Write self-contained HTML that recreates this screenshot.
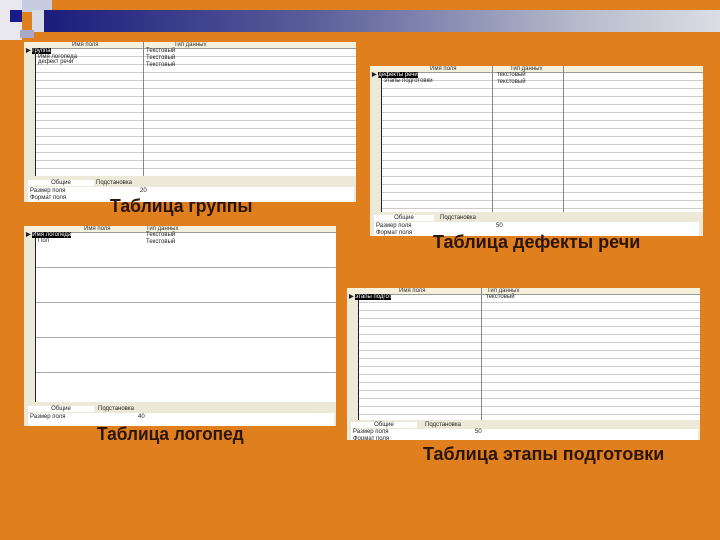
<!DOCTYPE html><html><head><meta charset="utf-8"><style>
body{margin:0;width:720px;height:540px;background:#E07F1E;position:relative;overflow:hidden;font-family:"Liberation Sans",sans-serif}
.a{position:absolute}
.p{position:absolute;background:#fff;overflow:hidden}
.hd{position:absolute;left:0;right:0;top:0;height:6px;background:#F4F0DC;border-bottom:1px solid #999;font-size:6px;line-height:6px;color:#333}
.sel{position:absolute;left:0;top:6px;width:11px;background:#ECE9D8;border-right:1px solid #222}
.rows{position:absolute;left:12px;right:0;top:7px;background:repeating-linear-gradient(#fff 0 7px,#ccc 7px 8px)}
.vl{position:absolute;top:0;width:1px;background:#888}
.bot{position:absolute;left:0;right:0;bottom:0;background:#ECE9D8}
.t{font-size:6px;line-height:7px;color:#222;position:absolute;white-space:nowrap}
.cap{position:absolute;font-weight:bold;font-size:18px;color:#2a1508;white-space:nowrap;transform-origin:0 0}
</style></head><body>
<div class="a" style="left:0;top:0;width:22px;height:40px;background:#E8E8EE"></div>
<div class="a" style="left:10px;top:10px;width:12px;height:12px;background:#1a1a8a"></div>
<div class="a" style="left:22px;top:0;width:30px;height:12px;background:#C8CCE0"></div>
<div class="a" style="left:32px;top:10px;width:22px;height:22px;background:#D8DAE6"></div>
<div class="a" style="left:20px;top:30px;width:14px;height:8px;background:#A8AACC"></div>
<div class="a" style="left:44px;top:10px;width:676px;height:22px;background:linear-gradient(90deg,#1c1c7c,#5a5f9a 40%,#b8bccc 80%,#dcdde4)"></div>

<div class="p" style="left:24px;top:42px;width:332px;height:160px">
<div class="hd"><span style="position:absolute;left:48px">Имя поля</span><span style="position:absolute;left:150px">Тип данных</span></div>
<div class="sel" style="height:128px"></div>
<div class="rows" style="height:127px"></div>
<div class="vl" style="left:119px;height:134px"></div>
<div class="t" style="left:2px;top:6px"><b>▶</b> <span style="background:#000;color:#fff">группа</span></div>
<div class="t" style="left:14px;top:12px">Имя логопеда</div>
<div class="t" style="left:14px;top:17px">дефект речи</div>
<div class="t" style="left:122px;top:6px">Текстовый<br>Текстовый<br>Текстовый</div>
<div class="bot" style="height:26px"><div class="t" style="left:4px;top:4px;background:#fff;width:66px;height:6px;text-align:center">Общие</div><div class="t" style="left:72px;top:4px">Подстановка</div><div class="a" style="left:4px;top:11px;width:326px;height:15px;background:#fff"></div><div class="t" style="left:6px;top:12px">Размер поля<br>Формат поля</div><div class="t" style="left:116px;top:12px">20</div></div>
</div>
<div class="cap" style="left:110px;top:196px;transform:scaleX(0.98)">Таблица группы</div>

<div class="p" style="left:370px;top:66px;width:333px;height:170px">
<div class="hd"><span style="position:absolute;left:60px">Имя поля</span><span style="position:absolute;left:140px">Тип данных</span></div>
<div class="sel" style="height:140px"></div>
<div class="rows" style="height:139px"></div>
<div class="vl" style="left:122px;height:146px"></div>
<div class="vl" style="left:193px;height:146px"></div>
<div class="t" style="left:2px;top:6px"><b>▶</b> <span style="background:#000;color:#fff">дефекты речи</span></div>
<div class="t" style="left:14px;top:12px">этапы подготовки</div>
<div class="t" style="left:127px;top:6px">текстовый<br>текстовый</div>
<div class="bot" style="height:24px"><div class="t" style="left:4px;top:3px;background:#fff;width:60px;height:6px;text-align:center">Общие</div><div class="t" style="left:70px;top:3px">Подстановка</div><div class="a" style="left:4px;top:10px;width:325px;height:14px;background:#fff"></div><div class="t" style="left:6px;top:11px">Размер поля<br>Формат поля</div><div class="t" style="left:126px;top:11px">50</div></div>
</div>
<div class="cap" style="left:433px;top:232px">Таблица дефекты речи</div>

<div class="p" style="left:24px;top:226px;width:312px;height:200px">
<div class="hd"><span style="position:absolute;left:60px">Имя поля</span><span style="position:absolute;left:122px">Тип данных</span></div>
<div class="sel" style="height:170px"></div>
<div class="rows" style="height:169px;background:repeating-linear-gradient(#fff 0 34px,#aaa 34px 35px)"></div>
<div class="t" style="left:2px;top:6px"><b>▶</b> <span style="background:#000;color:#fff">Имя логопеда</span></div>
<div class="t" style="left:14px;top:12px">Пол</div>
<div class="t" style="left:122px;top:6px">Текстовый<br>Текстовый</div>
<div class="bot" style="height:24px"><div class="t" style="left:4px;top:4px;background:#fff;width:66px;height:6px;text-align:center">Общие</div><div class="t" style="left:74px;top:4px">Подстановка</div><div class="a" style="left:4px;top:11px;width:306px;height:13px;background:#fff"></div><div class="t" style="left:6px;top:12px">Размер поля</div><div class="t" style="left:114px;top:12px">40</div></div>
</div>
<div class="cap" style="left:97px;top:424px;transform:scaleX(0.96)">Таблица логопед</div>

<div class="p" style="left:347px;top:288px;width:353px;height:152px">
<div class="hd"><span style="position:absolute;left:52px">Имя поля</span><span style="position:absolute;left:140px">Тип данных</span></div>
<div class="sel" style="height:126px"></div>
<div class="rows" style="height:125px"></div>
<div class="vl" style="left:134px;height:132px"></div>
<div class="t" style="left:2px;top:6px"><b>▶</b> <span style="background:#000;color:#fff">этапы подгот</span></div>
<div class="t" style="left:139px;top:6px">текстовый</div>
<div class="bot" style="height:20px"><div class="t" style="left:4px;top:2px;background:#fff;width:66px;height:6px;text-align:center">Общие</div><div class="t" style="left:78px;top:2px">Подстановка</div><div class="a" style="left:4px;top:9px;width:347px;height:11px;background:#fff"></div><div class="t" style="left:6px;top:9px">Размер поля<br>Формат поля</div><div class="t" style="left:128px;top:9px">50</div></div>
</div>
<div class="cap" style="left:423px;top:444px">Таблица этапы подготовки</div>
</body></html>
